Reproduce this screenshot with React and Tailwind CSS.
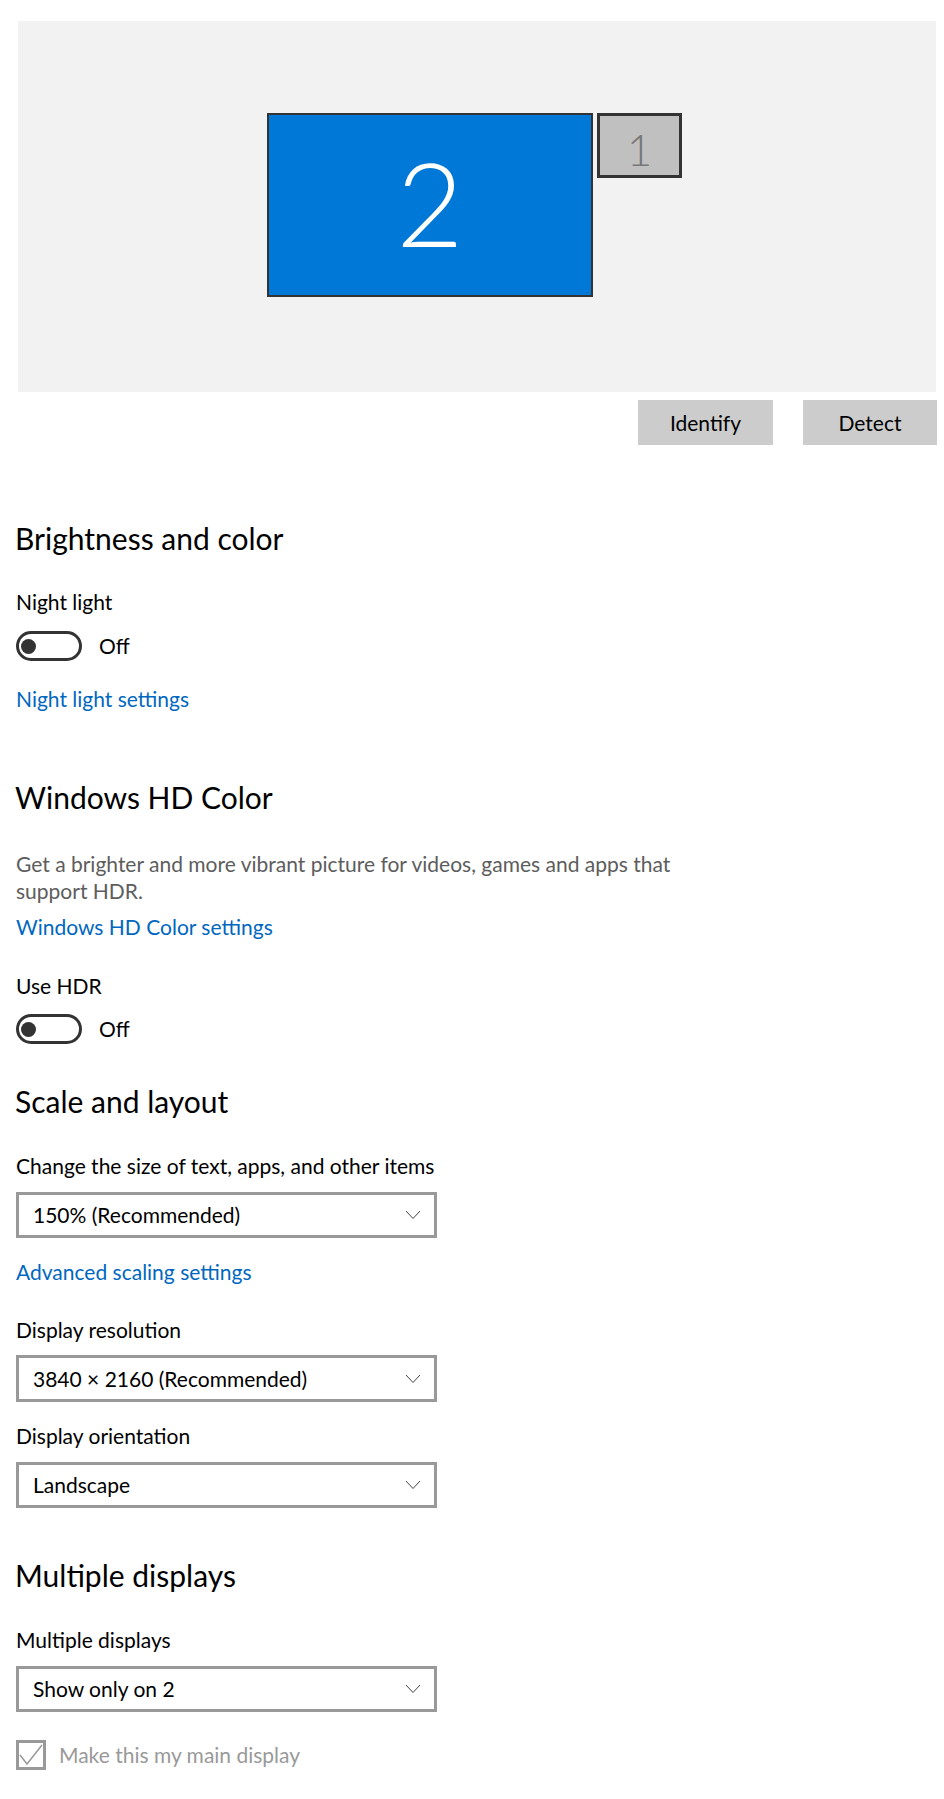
import React from "react";

const font = { fontFamily: "Lato, 'Open Sans', sans-serif" };

function Toggle() {
  return (
    <div className="flex items-center h-[30px]">
      <div className="w-[66px] h-[30px] rounded-full border-[3px] border-[#333] flex items-center pl-[2px]">
        <div className="w-[15px] h-[15px] rounded-full bg-[#333]"></div>
      </div>
      <span className="ml-[17px] text-[21px] leading-[30px] text-black">Off</span>
    </div>
  );
}

function Dropdown({ value, className = "" }) {
  return (
    <div
      className={`w-[421px] h-[46px] border-[3px] border-[#999] bg-white flex items-center justify-between pl-[14px] pr-[13px] ${className}`}
    >
      <span className="text-[21px] leading-[28px] text-black">{value}</span>
      <svg width="16" height="10" viewBox="0 0 16 10" fill="none">
        <polyline points="1,1 8,8.5 15,1" stroke="#444" strokeWidth="1" />
      </svg>
    </div>
  );
}

function Heading({ children, className = "" }) {
  return (
    <h2 className={`-ml-[1px] text-[30px] leading-[40px] text-black font-normal ${className}`}>
      {children}
    </h2>
  );
}

function Label({ children, className = "" }) {
  return <div className={`text-[21px] leading-[28px] text-black ${className}`}>{children}</div>;
}

function Link({ children, className = "" }) {
  return (
    <div className={`text-[21px] leading-[28px] text-[#0067c0] ${className}`}>{children}</div>
  );
}

export default function App() {
  return (
    <div className="min-h-screen bg-white pb-[30px]" style={font}>
      <div className="w-[937px] pt-[21px]">
        <div className="relative ml-[18px] w-[918px] h-[371px] bg-[#f2f2f2]">
          {/* monitor 2 */}
          <div className="absolute left-[249px] top-[92px] w-[326px] h-[184px] bg-[#0078d7] border-2 border-[#333] flex items-center justify-center pb-[4px]">
            <span className="text-white font-light text-[116px] leading-none">2</span>
          </div>
          {/* monitor 1 */}
          <div className="absolute left-[579px] top-[92px] w-[85px] h-[65px] bg-[#c0c0c0] border-[3px] border-[#333] flex items-center justify-center pt-[6px]">
            <span className="text-[#777] font-light text-[44px] leading-none">1</span>
          </div>
        </div>
        <div className="flex justify-end gap-[30px] mt-[8px]">
          <button className="w-[135px] h-[45px] bg-[#cccccc] text-black text-[21px]">Identify</button>
          <button className="w-[134px] h-[45px] bg-[#cccccc] text-black text-[21px]">Detect</button>
        </div>
      </div>

      <div className="pl-[16px]">
        {/* Brightness and color */}
        <Heading className="mt-[73px]">Brightness and color</Heading>
        <Label className="mt-[30px]">Night light</Label>
        <div className="mt-[15px]">
          <Toggle />
        </div>
        <Link className="mt-[24px]">Night light settings</Link>

        {/* Windows HD Color */}
        <Heading className="mt-[64px]">Windows HD Color</Heading>
        <p className="mt-[33px] w-[690px] text-[21px] leading-[27px] text-[#5d5d5d]">
          Get a brighter and more vibrant picture for videos, games and apps that support HDR.
        </p>
        <Link className="mt-[9px]">Windows HD Color settings</Link>
        <Label className="mt-[31px]">Use HDR</Label>
        <div className="mt-[14px]">
          <Toggle />
        </div>

        {/* Scale and layout */}
        <Heading className="mt-[37px]">Scale and layout</Heading>
        <Label className="mt-[31px]">Change the size of text, apps, and other items</Label>
        <Dropdown value="150% (Recommended)" className="mt-[12px]" />
        <Link className="mt-[20px]">Advanced scaling settings</Link>
        <Label className="mt-[30px]">Display resolution</Label>
        <Dropdown value="3840 × 2160 (Recommended)" className="mt-[11px] h-[47px]" />
        <Label className="mt-[20px]">Display orientation</Label>
        <Dropdown value="Landscape" className="mt-[12px]" />

        {/* Multiple displays */}
        <Heading className="mt-[47px]">Multiple displays</Heading>
        <Label className="mt-[31px]">Multiple displays</Label>
        <Dropdown value="Show only on 2" className="mt-[12px]" />
        <div className="mt-[28px] flex items-center h-[30px]">
          <div className="w-[30px] h-[30px] border-[3px] border-[#999] flex items-center justify-center">
            <svg width="24" height="24" viewBox="0 0 24 24" fill="none">
              <polyline points="1,12 8,21 23,2" stroke="#999" strokeWidth="1.5" />
            </svg>
          </div>
          <span className="ml-[13px] text-[21px] leading-[30px] text-[#999]">Make this my main display</span>
        </div>
      </div>
    </div>
  );
}
